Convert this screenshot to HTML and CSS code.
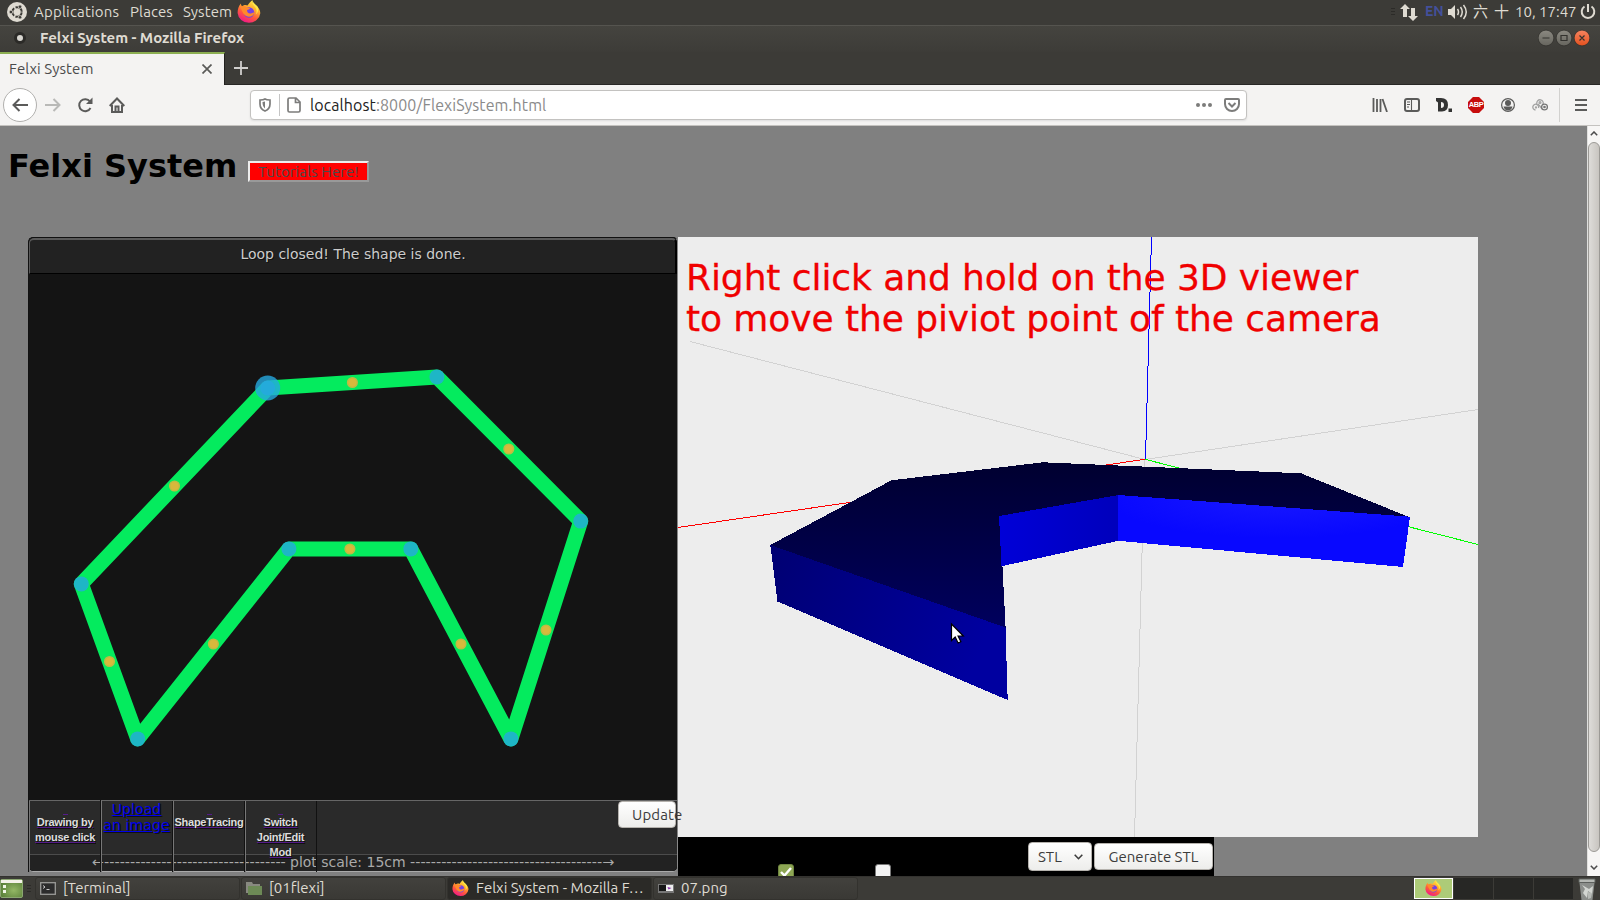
FILE: index.html
```html
<!DOCTYPE html>
<html lang="en">
<head>
<meta charset="utf-8">
<title>Felxi System</title>
<link rel="stylesheet" href="styles.css">
</head>
<body>
<svg width="0" height="0" class="defs">
  <defs>
    <linearGradient id="fxBody" x1="0.8" y1="0" x2="0.3" y2="1">
      <stop offset="0" stop-color="#fff44f"/><stop offset=".35" stop-color="#ffb02e"/><stop offset=".65" stop-color="#ff5a3c"/><stop offset="1" stop-color="#f0148c"/>
    </linearGradient>
    <symbol id="firefox" viewBox="0 0 24 24">
      <path d="M15.500 0c-.6 2 .3 3.200 2 4.600 2 1.200 5.800 4 5.800 8.600A11.400 10.600 0 0 1 .6 13C.6 9.500 1.700 6 3.800 3.600c.2 1.400.6 2 1.200 2.700C7.500 4.600 9 5 10.500 5.500 12 3.500 13.500 1.500 15.500 0z" fill="url(#fxBody)"/>
      <circle cx="12" cy="12.500" r="5.200" fill="#7542e5"/>
      <path d="M3 7c3-2 6-1 7.500.8L13 8c-.5 1.500-2.500 1.700-3 2.200 0 2 1.200 3.600 3.800 3.300 1.800-.3 2-1.500 3.400-.8-.6 3.800-6.200 5.500-9.400 2.300C5.500 13.500 5 9.500 3 7z" fill="#ff8a2b"/>
      <path d="M15.500 0c-1 3 .5 5 2.500 7 2 2.200 2 5.500.8 7.500 2.700-2.500 3.400-6.500.7-9C17.500 3.500 15.500 2 15.500 0z" fill="#ffe847"/>
    </symbol>
  </defs>
</svg>

<header class="panel">
  <svg class="ubuntu" width="20" height="20" viewBox="0 0 20 20"><circle cx="10" cy="10" r="10" fill="#dfdbd2"/><circle cx="10" cy="10" r="4.700" fill="none" stroke="#3c3b37" stroke-width="2" stroke-dasharray="8.400 1.440" transform="rotate(5 10 10)"/><g fill="#3c3b37" stroke="#dfdbd2" stroke-width=".7"><circle cx="3.900" cy="10" r="1.800"/><circle cx="13" cy="4.700" r="1.800"/><circle cx="13" cy="15.300" r="1.800"/></g></svg>
  <span class="m-app">Applications</span><span class="m-pl">Places</span><span class="m-sys">System</span>
  <svg class="fx-top" width="24" height="24"><use href="#firefox"/></svg>
  <div class="tray">
    <svg class="grip" width="4" height="8" viewBox="0 0 4 8"><path d="M0 .5h4M0 3.500h4M0 6.500h4" stroke="#2c2b28"/></svg>
    <svg width="18" height="18" viewBox="0 0 18 18" fill="#dfdbd2"><path d="M5 1l5 5H7v8H3V6H0zM13 18l-5-5h3V5h4v8h3z"/></svg>
    <span class="lang">EN</span>
    <svg class="vol" width="20" height="18" viewBox="0 0 20 18" fill="none" stroke="#dfdbd2" stroke-width="1.500"><path d="M0 6h3l4-4v14l-4-4H0z" fill="#dfdbd2" stroke="none"/><path d="M9.500 6q2 3 0 6M12.500 4q3.500 5 0 10M15.500 2q5.500 7 0 14"/></svg>
    <span class="clock"><span class="han">六</span><span class="han">十</span>10, 17:47</span>
    <svg width="16" height="16" viewBox="0 0 16 16" fill="none" stroke="#dfdbd2" stroke-width="2"><path d="M4.500 2.500a6.300 6.300 0 1 0 7 0M8 0v8"/></svg>
  </div>
</header>

<div class="titlebar">
  <i class="app-dot"></i>
  <b>Felxi System - Mozilla Firefox</b>
  <div class="wbtns">
    <svg width="52" height="18" viewBox="0 0 52 18"><defs><linearGradient id="wb" x2="0" y2="1"><stop stop-color="#8b8981"/><stop offset="1" stop-color="#66655e"/></linearGradient><linearGradient id="wc" x2="0" y2="1"><stop stop-color="#f68460"/><stop offset="1" stop-color="#e4511e"/></linearGradient></defs><g stroke="#31302c" stroke-width=".8"><circle cx="8" cy="9" r="7.900" fill="url(#wb)"/><circle cx="26" cy="9" r="7.900" fill="url(#wb)"/><circle cx="44" cy="9" r="7.900" fill="url(#wc)"/></g><path d="M4.500 9h7M23 6.500h6v5h-6zM41.500 6.500l5 5M46.500 6.500l-5 5" fill="none" stroke="#33322e" stroke-width="1.200"/></svg>
  </div>
</div>

<div class="tabs">
  <div class="tab"><span>Felxi System</span><svg width="10" height="10" viewBox="0 0 10 10"><path d="M.5.5l9 9M9.500.5l-9 9" stroke="#5a5a58" stroke-width="1.700"/></svg></div>
  <svg class="plus" width="14" height="14" viewBox="0 0 14 14"><path d="M7 0v14M0 7h14" stroke="#d0cfcd" stroke-width="1.800"/></svg>
</div>

<nav class="toolbar">
  <span class="back"><svg width="16" height="14" viewBox="0 0 16 14"><path d="M7.500 1L1.500 7l6 6M1.500 7H16" fill="none" stroke="#5b5b5a" stroke-width="2"/></svg></span>
  <svg class="fwd" width="16" height="14" viewBox="0 0 16 14"><path d="M8.500 1l6 6-6 6M14.500 7H0" fill="none" stroke="#b9b9b7" stroke-width="2"/></svg>
  <svg class="reload" width="16" height="16" viewBox="0 0 16 16"><path d="M13.500 11A6 6 0 1 1 13 4.500" fill="none" stroke="#5b5b5a" stroke-width="2"/><path d="M15.500 0.500v6.500H9z" fill="#5b5b5a"/></svg>
  <svg class="home" width="16" height="16" viewBox="0 0 16 16"><path d="M0.700 9L8 1.500 15.300 9M3 8v7h10V8" fill="none" stroke="#5b5b5a" stroke-width="2"/><path d="M6.500 15V9.500h3V15" fill="none" stroke="#5b5b5a" stroke-width="2"/></svg>
  <div class="url">
    <svg width="12" height="14" viewBox="0 0 12 14"><path d="M1 2q3.500 0 5-1 1.500 1 5 1v4q0 5-5 7-5-2-5-7z" fill="none" stroke="#7c7c7b" stroke-width="1.700"/><path d="M6 3.500v7Q3.500 8.500 3.500 4z" fill="#7c7c7b"/></svg>
    <i class="sep"></i>
    <svg class="page" width="14" height="16" viewBox="0 0 14 16"><path d="M2.500 1H9l4 4v8.500q0 1.500-1.500 1.500h-9Q1 15 1 13.500v-11Q1 1 2.500 1zM8.500 1v4.500H13" fill="none" stroke="#7c7c7b" stroke-width="1.700"/></svg>
    <span class="addr">localhost<em>:8000/FlexiSystem.html</em></span>
    <svg class="dots" width="16" height="4" viewBox="0 0 16 4" fill="#7c7c7b"><circle cx="2" cy="2" r="2"/><circle cx="8" cy="2" r="2"/><circle cx="14" cy="2" r="2"/></svg>
    <svg width="16" height="14" viewBox="0 0 16 14" fill="none" stroke="#7c7c7b" stroke-width="2"><path d="M2 1h12q1 0 1 1v4a7 7 0 0 1-14 0V2q0-1 1-1z"/><path d="M4.500 5L8 8.500 11.500 5"/></svg>
  </div>
  <div class="tools">
    <svg width="16" height="14" viewBox="0 0 16 14"><path d="M1.500 0v14M5 1v13M8.500 1v13M10.500 1l4.500 13" stroke="#5b5b5a" stroke-width="1.800"/></svg>
    <svg width="16" height="14" viewBox="0 0 16 14"><rect x="1" y="1" width="14" height="12" rx="2" fill="none" stroke="#5b5b5a" stroke-width="2"/><path d="M7.500 1v12M3 4h3M3 6.500h3M3 9h2" stroke="#5b5b5a" stroke-width="1.100"/></svg>
    <svg width="16" height="14" viewBox="0 0 16 14"><path d="M0 0h5q7 0 7 7 0 6-6 6.500H2V4.500L0 3zM5 4v6q3 0 3-3t-3-3z" fill="#333" fill-rule="evenodd"/><path d="M12.500 10.500H16V14h-3.500z" fill="#333"/></svg>
    <span class="abp">ABP</span>
    <svg width="16" height="14" viewBox="-1 0 16 14"><circle cx="7" cy="7" r="6.400" fill="none" stroke="#5b5b5a" stroke-width="1.200"/><circle cx="7" cy="5" r="3" fill="#5b5b5a"/><path d="M2.500 8.500h9q-1 4-4.500 4t-4.500-4z" fill="#5b5b5a"/></svg>
    <svg width="16" height="14" viewBox="0 0 16 14" fill="none" stroke="#a2a2a2" stroke-width="1.300"><path d="M3.500 12A2.900 2.900 0 1 1 6.500 10M5 6a3.200 3.200 0 1 1 5.500 1"/><path d="M6 6q3 3 4 5"/><circle cx="8" cy="4.500" r=".9"/><circle cx="4" cy="9.500" r=".5"/><circle cx="12.500" cy="9" r="2.900" stroke="#777"/><circle cx="12.500" cy="9" r=".7" stroke="#777"/></svg>
    <i class="vsep"></i>
    <svg width="12" height="12" viewBox="0 0 12 12"><path d="M0 1h12M0 6h12M0 11h12" stroke="#5b5b5a" stroke-width="2"/></svg>
  </div>
</nav>

<div class="content">
  <main class="page-body">
    <div class="head"><h1>Felxi System</h1><button class="tut">Tutorials Here!</button></div>
    <div class="cols">
      <section class="editor">
        <div class="status">Loop closed! The shape is done.</div>
        <svg class="plot" width="648" height="526" viewBox="29 274 648 526">
          <path d="M267.700 388L436.900 376.900 580.700 521.100 510.900 738.900 410.800 548.900H288.900L137.700 738.900 81.300 583.900Z" fill="none" stroke="#04eb5e" stroke-width="15" stroke-linejoin="round"/>
          <g fill="#26a9e0" fill-opacity=".8"><circle cx="267.700" cy="388" r="12.500"/><circle cx="267.700" cy="388" r="7.500"/><circle cx="436.900" cy="376.900" r="7.500"/><circle cx="580.700" cy="521.100" r="7.500"/><circle cx="510.900" cy="738.900" r="7.500"/><circle cx="410.800" cy="548.900" r="7.500"/><circle cx="288.900" cy="548.900" r="7.500"/><circle cx="137.700" cy="738.900" r="7.500"/><circle cx="81.300" cy="583.900" r="7.500"/></g>
          <g fill="#d8b83c" stroke="#bdbb42" stroke-width="1.500"><circle cx="352.400" cy="382.500" r="4.800"/><circle cx="508.800" cy="449" r="4.800"/><circle cx="546" cy="630" r="4.800"/><circle cx="461" cy="644" r="4.800"/><circle cx="349.900" cy="549" r="4.800"/><circle cx="213.400" cy="644" r="4.800"/><circle cx="109.500" cy="661.500" r="4.800"/><circle cx="174.500" cy="486" r="4.800"/></g>
        </svg>
        <div class="tools-row">
          <a class="cell sm"><i class="gap"></i>Drawing by<br>mouse click</a>
          <a class="cell up">Upload<br>an image</a>
          <a class="cell sm"><i class="gap"></i>ShapeTracing</a>
          <a class="cell sm"><i class="gap"></i>Switch<br>Joint/Edit<br>Mod</a>
          <button class="btn update">Update</button>
        </div>
        <div class="scale"><span class="arrow">←-----------------------------------</span><span class="lbl">plot scale: 15cm</span><span class="arrow r">-------------------------------------→</span></div>
      </section>
      <section class="viewer">
        <div class="scene">
          <svg width="800" height="600" viewBox="678 237 800 600">
            <defs>
              <linearGradient id="top" x1="0" y1="0" x2="0" y2="1"><stop stop-color="#000030"/><stop offset="1" stop-color="#00005e"/></linearGradient>
              <linearGradient id="front" x1="0" y1="0" x2="1" y2=".3"><stop stop-color="#000072"/><stop offset="1" stop-color="#0000a0"/></linearGradient>
              <linearGradient id="in" x1="0" y1="0" x2="1" y2="0"><stop stop-color="#0000d8"/><stop offset="1" stop-color="#0000bc"/></linearGradient>
              <radialGradient id="right" cx=".55" cy="0" r=".6"><stop stop-color="#1919ff"/><stop offset="1" stop-color="#0808ff"/></radialGradient>
            </defs>
            <g shape-rendering="crispEdges" stroke-width="1" fill="none">
              <path d="M690 341.500L1145 459.500 1478 409.500M1144.500 459.500L1134.500 837" stroke="#d2d2d2"/>
              <path d="M678 527.500L1145 459.300" stroke="#f00"/><path d="M1145 459.300L1478 544.500" stroke="#0f0"/><path d="M1145.500 459L1151.500 237" stroke="#00f"/>
            </g>
            <g shape-rendering="crispEdges">
              <path d="M770.300 545L891.500 480.300 1043 462.300 1301 473.300 1409.500 517.200 1118.500 497 1000 518 1005.700 629Z" fill="url(#top)"/>
              <path d="M770.300 545L1005.500 627.500 1007.700 700 777.500 601.500Z" fill="url(#front)"/>
              <path d="M999 516L1118.500 495V540.800L1001.500 566.200Z" fill="url(#in)"/>
              <path d="M1118 495L1410 516.700 1403 567 1118 540.800Z" fill="url(#right)"/>
            </g>
            <path d="M951.500 624v16.500l3.700-3.500 2.900 6 2.800-1.300-2.800-5.700h5.200z" fill="#fff" stroke="#000" stroke-width="1.200"/>
          </svg>
          <p class="hint">Right click and hold on the 3D viewer<br>to move the piviot point of the camera</p>
        </div>
        <div class="export">
          <i class="chk on"><svg width="12" height="10" viewBox="0 0 12 10"><path d="M1 5l3.500 3.500L11 1" fill="none" stroke="#fff" stroke-width="2.400"/></svg></i>
          <i class="chk off"></i>
          <span class="btn sel">STL <svg width="9" height="6" viewBox="0 0 9 6"><path d="M.7.7l3.800 4L8.300.7" fill="none" stroke="#3c3c3c" stroke-width="1.600"/></svg></span>
          <button class="btn gen">Generate STL</button>
        </div>
      </section>
    </div>
  </main>
  <aside class="sbar">
    <svg width="8" height="5" viewBox="0 0 8 5"><path d="M.8 4.300L4 1l3.200 3.300" fill="none" stroke="#4c4c4c" stroke-width="1.500"/></svg>
    <i class="thumb"></i>
    <svg width="8" height="5" viewBox="0 0 8 5"><path d="M.8.7L4 4 7.200.7" fill="none" stroke="#4c4c4c" stroke-width="1.500"/></svg>
  </aside>
</div>

<footer class="taskbar">
  <svg class="desk" width="23" height="19" viewBox="0 0 23 19"><defs><radialGradient id="dk" cx=".6" cy=".6" r=".7"><stop stop-color="#93b765"/><stop offset="1" stop-color="#557b35"/></radialGradient></defs><rect x=".5" y=".5" width="22" height="18" rx="1.500" fill="url(#dk)" stroke="#8ba771"/><path d="M1 1h21v3H1z" fill="#f3f1e8"/><path d="M3 6h3v3H3zM3 11h3v3H3z" fill="#f1f6e6"/></svg>
  <svg class="grip2" width="4" height="8" viewBox="0 0 4 8"><path d="M0 .5h4M0 3.500h4M0 6.500h4" stroke="#2c2b28"/></svg>
  <div class="task"><svg width="16" height="13" viewBox="0 0 16 13"><rect x=".7" y=".7" width="14.600" height="11.600" fill="#2c2c2c" stroke="#9b9b98" stroke-width="1.300"/><path d="M3 3.500l2 1.500-2 1.500M6.500 7.500h3" fill="none" stroke="#ddd" stroke-width=".9"/></svg><span>[Terminal]</span></div>
  <div class="task"><svg width="16" height="14" viewBox="0 0 16 14"><path d="M0 1h6l1 2h7v9H0z" fill="#888980"/><path d="M2 5h14v9H2z" fill="#6d8a56"/></svg><span>[01flexi]</span></div>
  <div class="task active"><svg width="17" height="17"><use href="#firefox"/></svg><span>Felxi System - Mozilla F…</span></div>
  <div class="task"><svg width="16" height="9" viewBox="0 0 16 9"><rect width="16" height="9" fill="#777"/><rect x="1" y="1" width="7" height="6" fill="#161616"/><rect x="8" y="1" width="7" height="6" fill="#eee"/><path d="M9.500 3l4 1-3 1.500z" fill="#83a"/></svg><span>07.png</span></div>
  <div class="spaces"><i class="cur"><svg width="17" height="17"><use href="#firefox"/></svg></i><i></i><i></i><i></i></div>
  <svg class="trash" width="20" height="22" viewBox="0 0 20 22"><path d="M2.500 5h15l-2 17H4.500z" fill="#8b8e8b"/><path d="M5 7l3 4-2 4 4 5 1-7 4 3 1-8-4 3z" fill="#d3d6d2"/><path d="M11 14l4 1-1 5-3 1z" fill="#b8bbb7"/><path d="M2 1h16v3.500H2z" fill="#b5b8b4" stroke="#5d605d"/></svg>
</footer>
</body>
</html>
```

FILE: styles.css
```css
* { box-sizing: border-box; }
body { margin: 0; width: 1600px; height: 900px; overflow: hidden; display: flex; flex-direction: column; background: #808080; font-family: Ubuntu, "Noto Sans", "Noto Sans CJK TC", sans-serif; font-size: 15px; color: #3c3c3c; }
svg { display: block; flex: none; }
.defs { position: absolute; }
button { font: inherit; padding: 0; }

.panel { height: 25px; display: flex; align-items: center; padding: 0 4px 1px 7px; background: #3c3b37; color: #dfdbd2; line-height: 23px; white-space: nowrap; }
.panel span { margin-top: -1px; }
.ubuntu { margin-right: 7px; }
.m-app { width: 96px; letter-spacing: .2px; }
.m-pl { width: 53px; letter-spacing: .1px; }
.m-sys { width: 54px; letter-spacing: .1px; }
.tray { margin-left: auto; display: flex; align-items: center; }
.grip { margin-right: 5px; }
.grip2 { margin-right: 4px; }
.lang { margin-left: 7px; width: 23px; color: #43509a; font-weight: 600; font-size: 14px; }
.clock { width: 107px; }
.han { display: inline-block; width: 21px; }
.vol { margin-right: 5px; }

.titlebar { height: 27px; display: flex; align-items: center; padding: 0 10px 2px 14px; background: linear-gradient(#45443f, #3d3c38); border-top: 1px solid #55544f; color: #dfdbd2; }
.titlebar b { font-weight: 600; margin-left: 14px; line-height: 24px; white-space: nowrap; letter-spacing: -.06px; }
.app-dot { width: 12px; height: 12px; border: 3px solid #2b2a27; border-radius: 50%; background: #d8d6d0; }
.wbtns { margin-left: auto; }

.tabs { height: 33px; display: flex; background: #3c3b37; border-bottom: 1px solid #282725; }
.tab { width: 225px; height: 33px; margin-bottom: -1px; display: flex; align-items: center; justify-content: space-between; padding: 0 12px 2px 9px; background: #f4f3f2; border-top: 2px solid #8caf52; border-right: 1px solid #22211f; color: #4b4b4b; letter-spacing: .1px; }
.plus { margin: 9px 0 0 9px; }

.toolbar { height: 41px; display: flex; align-items: center; padding: 0 13px 0 3px; background: #f4f3f2; border-bottom: 1px solid #c4c2bf; }
.back { width: 34px; height: 34px; border: 1px solid #b1b0ae; border-radius: 50%; background: #fff; display: grid; place-items: center; }
.fwd { margin-left: 8px; }
.reload { margin-left: 16px; }
.home { margin-left: 16px; }
.url { width: 997px; height: 30px; margin-left: 125px; display: flex; align-items: center; padding: 0 6px 0 8px; background: #fff; border: 1px solid #c3c2c0; border-radius: 4px; box-shadow: 0 1px 2px #ddd; }
.sep { width: 1px; height: 22px; margin: 0 7px 0 8px; background: #c5c5c5; }
.addr { margin-left: 9px; font-size: 16px; color: #222; white-space: nowrap; letter-spacing: .09px; }
.addr em { font-style: normal; color: #8a8a8a; }
.dots { margin: 0 12px 0 auto; }
.tools { margin-left: auto; display: flex; align-items: center; gap: 16px; }
.abp { width: 16px; height: 16px; clip-path: polygon(31% 0, 69% 0, 100% 31%, 100% 69%, 69% 100%, 31% 100%, 0 69%, 0 31%); background: #c70d0d; color: #fff; font: bold 7.500px/16px "Liberation Sans", sans-serif; letter-spacing: -.4px; text-align: center; }
.vsep { width: 1px; height: 34px; margin: 0 -1px 0 -5px; background: #d2d1cf; }

.content { height: 750px; display: flex; overflow: hidden; }
.page-body { width: 1587px; font-family: "DejaVu Sans", sans-serif; }
.head { height: 111px; display: flex; align-items: flex-start; padding-left: 8px; }
h1 { margin: 22px 11px 0 0; width: 229px; font-size: 32px; line-height: 37px; color: #000; white-space: nowrap; }
.tut { width: 121px; height: 21px; margin-top: 35px; background: #f00; border: 2px outset #ededed; font: 15px/17px Ubuntu, "Noto Sans", sans-serif; color: #4b4b4b; letter-spacing: .1px; }
.cols { display: flex; padding-left: 28px; align-items: flex-start; }
.editor { width: 650px; height: 635px; background: #141414; border: 1px solid #111; border-right: 1px solid #888; border-bottom: 1px solid #aaa; border-radius: 5px; display: flex; flex-direction: column; }
.status { height: 36px; background: #222; border-top: 2px solid #5a5a5a; border-left: 1px solid #5a5a5a; border-right: 2px solid #000; border-bottom: 1px solid #000; border-radius: 5px 5px 0 0; color: #ccc; text-align: center; line-height: 29px; font-size: 14px; text-shadow: 1px 1px 0 #111; padding-left: 1px; }
.tools-row { height: 55px; flex: none; display: flex; background: #2a2a2a; border-top: 1px solid #666; border-bottom: 1px solid #4c4c4c; position: relative; z-index: 1; }
.cell { width: 72px; height: 71px; border-left: 1px solid #777; box-shadow: -1px 0 0 #111; text-align: center; text-decoration: underline; text-shadow: 1px 1px 0 #111; white-space: nowrap; }
.cell:nth-child(4) { border-right: 1px solid #111; }
.sm { font: bold 11px/15px "Liberation Sans", sans-serif; letter-spacing: -.27px; color: #ddd; text-decoration-color: #551a8b; padding-right: 1px; }
.gap { display: block; width: 5px; height: 14px; margin: 0 auto; border-bottom: 1px solid #551a8b; }
.up { font-size: 14.200px; line-height: 17px; color: #00e; padding-right: 2px; margin-top: -1px; padding-top: 0; border-top: 1px solid #666; height: 72px; }
.up { line-height: 16px; }
.btn { border: 1px solid #b5b2ad; border-radius: 4px; background: linear-gradient(#fff, #ededeb); color: #3c3c3c; font: 15px Ubuntu, "Noto Sans", sans-serif; white-space: nowrap; }
.update { width: 58px; height: 27px; margin: 0 1px 0 auto; padding-left: 13px; text-align: left; overflow: visible; letter-spacing: .15px; }
.scale { height: 16px; background: #222; color: #aaa; display: flex; padding-left: 63px; border-radius: 0 0 5px 5px; line-height: 15px; font-size: 14px; white-space: nowrap; }
.arrow { width: 198px; font-size: 14.400px; }
.lbl { width: 120px; }
.viewer { width: 800px; }
.scene { position: relative; width: 800px; height: 600px; background: #ededed; }
.hint { position: absolute; left: 8px; top: 20px; margin: 0; color: #f00000; font-size: 36px; line-height: 41px; white-space: nowrap; letter-spacing: -.08px; -webkit-text-stroke: .3px #f00000; }
.export { width: 536px; height: 40px; display: flex; background: #000; padding-left: 100px; }
.chk { width: 16px; height: 16px; margin-top: 27px; border-radius: 3px; border: 1px solid #777; background: #f3f3f3; }
.on { background: #8da654; border-color: #6f8540; padding: 2px 1px; }
.off { margin-left: 81px; }
.sel { width: 64px; height: 29px; margin: 5px 2px 0 auto; display: flex; align-items: center; justify-content: space-between; padding: 0 8px 0 9px; }
.gen { width: 119px; height: 27px; margin: 6px 1px 0 0; }

.sbar { width: 13px; display: flex; flex-direction: column; align-items: center; justify-content: space-between; padding: 5px 0 6px; background: #f7f6f5; border-left: 1px solid #e0e0de; }
.thumb { width: 12px; height: 710px; margin-bottom: 8px; border: 1px solid #9c9a96; border-radius: 6px; background: linear-gradient(90deg, #dedcd9, #c8c5c0); }

.taskbar { height: 24px; display: flex; align-items: center; background: #3c3b37; border-top: 1px solid #33322f; color: #dfdbd2; line-height: 20px; }
.desk { margin: 0 4px 0 0; }
.task { width: 205px; height: 23px; margin-right: 1px; display: flex; align-items: center; padding: 0 0 1px 4px; border: 1px solid #33322e; border-radius: 3px; background: linear-gradient(#42413d, #3a3935); white-space: nowrap; }
.task span { margin-left: 7px; }
.active { background: #2b2a27; }
.spaces { margin-left: auto; display: flex; gap: 1px; }
.spaces i { width: 39px; height: 21px; background: #272725; display: grid; place-items: center; }
.spaces .cur { border: 1px solid #fff; background: #adcb78; }
.trash { margin: 0 3px 0 4px; }
```
